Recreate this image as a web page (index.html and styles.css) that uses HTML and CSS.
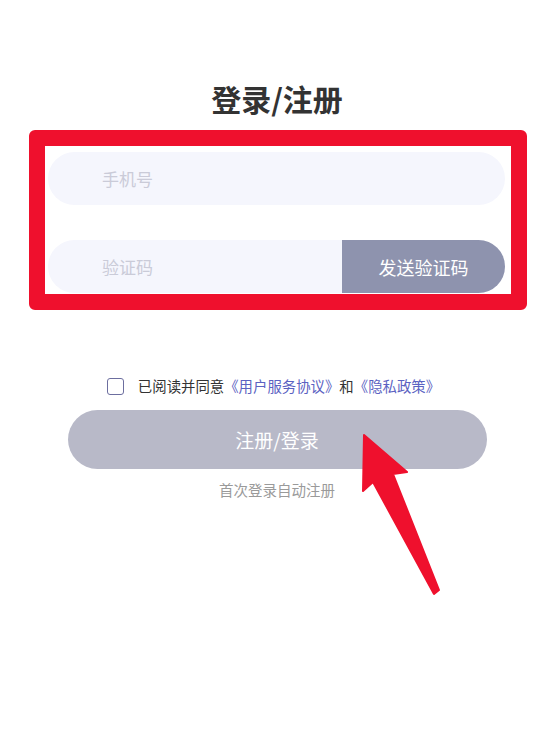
FILE: index.html
```html
<!DOCTYPE html>
<html lang="zh">
<head>
<meta charset="utf-8">
<title>登录/注册</title>
<link rel="stylesheet" href="styles.css">
</head>
<body>
<main class="page">
  <h1 class="title">登录/注册</h1>
  <div class="highlight">
    <div class="field">
      <span class="placeholder">手机号</span>
    </div>
    <div class="field field-code">
      <span class="placeholder">验证码</span>
      <button class="send-btn">发送验证码</button>
    </div>
  </div>
  <div class="agree">
    <span class="checkbox"></span>
    <span class="agree-text">已阅读并同意<a class="link">《用户服务协议》</a><span class="and">和</span><a class="link">《隐私政策》</a></span>
  </div>
  <button class="submit">注册/登录</button>
  <p class="hint">首次登录自动注册</p>
  <svg class="arrow" width="554" height="747" viewBox="0 0 554 747">
    <polygon points="364,435 407,472 393,474 439,590 434,594 373,482 363,491" fill="#ef102d" stroke="#ef102d" stroke-width="2" stroke-linejoin="round"/>
  </svg>
</main>
</body>
</html>
```

FILE: styles.css
```css
* { box-sizing: border-box; }
html, body { margin: 0; padding: 0; background: #fff; }
body {
  font-family: "Noto Sans CJK SC", "Noto Sans", sans-serif;
  width: 554px;
  height: 747px;
  overflow: hidden;
}
.page {
  position: relative;
  display: flex;
  flex-direction: column;
  align-items: center;
  padding-top: 78px;
  height: 747px;
}
.title {
  margin: 0;
  font-size: 30px;
  line-height: 40px;
  font-weight: 700;
  color: #333;
}
.highlight {
  margin-top: 12px;
  margin-left: 2px;
  width: 498px;
  border: 16px solid #ef102d;
  border-radius: 6px;
  padding: 6px 6px 1px 3px;
  display: flex;
  flex-direction: column;
  gap: 35px;
  background: #fff;
}
.field {
  height: 53px;
  border-radius: 27px;
  background: #f5f6fd;
  display: flex;
  align-items: center;
  overflow: hidden;
  padding-left: 54px;
}
.placeholder {
  font-size: 17px;
  color: #cacbd8;
  flex: 1;
}
.send-btn {
  width: 163px;
  height: 100%;
  border: none;
  background: #8e93ae;
  color: #fff;
  font-family: inherit;
  font-size: 18px;
  padding: 0;
}
.agree {
  margin-top: 66px;
  display: flex;
  align-items: center;
  height: 20px;
  margin-right: 7px;
}
.checkbox {
  width: 17px;
  height: 17px;
  border: 1.5px solid #6c6e9f;
  border-radius: 3px;
  margin-right: 14px;
}
.agree-text {
  font-size: 14.4px;
  color: #333;
  line-height: 20px;
  white-space: nowrap;
}
.link { color: #5b62c2; }
.submit {
  margin-top: 14px;
  width: 419px;
  height: 59px;
  border: none;
  border-radius: 30px;
  background: #b8b9c8;
  color: #fff;
  font-family: inherit;
  font-size: 19px;
}
.hint {
  margin: 11px 0 0;
  font-size: 14.5px;
  line-height: 20px;
  color: #9a9a9a;
}
.arrow {
  position: absolute;
  left: 0;
  top: 0;
  pointer-events: none;
}
```
